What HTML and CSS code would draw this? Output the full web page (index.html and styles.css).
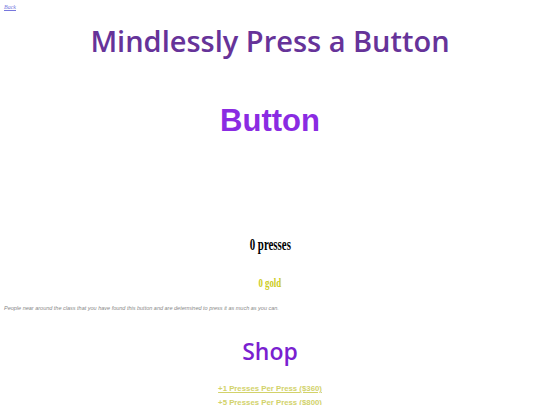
FILE: index.html
```html
<!DOCTYPE html>
<html>
<head>
<meta charset="utf-8">
<link rel="stylesheet" href="styles.css">
</head>
<body>
<a class="back" href="#">Back</a>
<h1 class="title">Mindlessly Press a Button</h1>
<div class="button">Button</div>
<div class="presses"><span class="narrow">0 presses</span></div>
<div class="gold"><span class="narrow">0 gold</span></div>
<p class="desc">People near around the class that you have found this button and are determined to press it as much as you can.</p>
<h2 class="shop">Shop</h2>
<div class="items">
  <a class="item" href="#">+1 Presses Per Press ($360)</a>
  <a class="item" href="#">+5 Presses Per Press ($800)</a>
</div>
</body>
</html>
```
FILE: styles.css
```css
html, body { margin: 0; padding: 0; background: #fff; }
body { padding: 3px 4px; font-family: "Liberation Serif", serif; }
.back { display: block; font-size: 6px; font-style: italic; color: #7777dd; line-height: 8px; }
.title {
  margin: 10px 0 0;
  text-align: center;
  font-family: "Open Sans", sans-serif;
  font-weight: 600;
  font-size: 29px;
  line-height: 40px;
  color: #663399;
}
.button {
  margin-top: 40px;
  text-align: center;
  font-family: "Liberation Sans", sans-serif;
  font-weight: bold;
  font-size: 31px;
  line-height: 40px;
  color: #8a2be2;
}
.narrow { display: inline-block; transform: scaleX(0.68); }
.presses {
  margin-top: 94px;
  text-align: center;
  font-weight: bold;
  font-size: 16px;
  line-height: 20px;
  color: #000;
}
.gold {
  margin-top: 20px;
  text-align: center;
  font-weight: bold;
  font-size: 13px;
  line-height: 16px;
  color: #cccc22;
}
.desc {
  margin: 13px 0 0;
  font-family: "Liberation Sans", sans-serif;
  font-style: italic;
  font-size: 5.5px;
  line-height: 8px;
  color: #888;
}
.shop {
  margin: 22px 0 0;
  text-align: center;
  font-family: "Open Sans", sans-serif;
  font-weight: 600;
  font-size: 23px;
  line-height: 34px;
  color: #7a1fd0;
}
.items { margin-top: 14px; display: flex; flex-direction: column; align-items: center; }
.item {
  font-family: "Liberation Sans", sans-serif;
  font-weight: bold;
  font-size: 7.8px;
  line-height: 14px;
  color: #d2d26a;
}
```
